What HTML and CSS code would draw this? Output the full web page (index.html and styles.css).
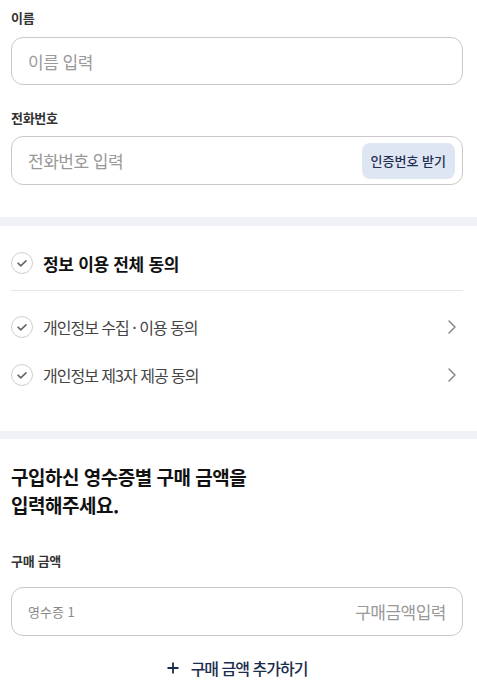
FILE: index.html
```html
<html lang="ko">
<head>
<meta charset="UTF-8" />
<meta name="viewport" content="width=device-width, initial-scale=1.0" />
<title>구매 금액 입력</title>
<link rel="stylesheet" href="styles.css">
</head>
<body>

<!-- 이름 / 전화번호 -->
<section class="form-section">
  <div class="label first">이름</div>
  <div class="field">
    <span class="placeholder">이름 입력</span>
  </div>

  <div class="label">전화번호</div>
  <div class="field phone">
    <span class="placeholder">전화번호 입력</span>
    <button class="verify-btn">인증번호 받기</button>
  </div>
</section>

<div class="band"></div>

<!-- 약관 동의 -->
<section class="agree-section">
  <div class="agree-all">
    <svg class="check" width="22" height="22" viewBox="0 0 22 22"><circle cx="11" cy="11" r="10.5" fill="none" stroke="#cfcfcf"/><path d="M7 11.2l2.8 2.6 5.2-5" fill="none" stroke="#666" stroke-width="1.6" stroke-linecap="round" stroke-linejoin="round"/></svg>
    <span>정보 이용 전체 동의</span>
  </div>
  <div class="divider"></div>
  <div class="agree-item">
    <svg class="check" width="22" height="22" viewBox="0 0 22 22"><circle cx="11" cy="11" r="10.5" fill="none" stroke="#cfcfcf"/><path d="M7 11.2l2.8 2.6 5.2-5" fill="none" stroke="#666" stroke-width="1.6" stroke-linecap="round" stroke-linejoin="round"/></svg>
    <span class="agree-text">개인정보 수집 · 이용 동의</span>
    <svg class="chevron" width="8" height="14" viewBox="0 0 8 14"><path d="M1 1l6 6-6 6" fill="none" stroke="#888" stroke-width="1.5" stroke-linecap="round" stroke-linejoin="round"/></svg>
  </div>
  <div class="agree-item">
    <svg class="check" width="22" height="22" viewBox="0 0 22 22"><circle cx="11" cy="11" r="10.5" fill="none" stroke="#cfcfcf"/><path d="M7 11.2l2.8 2.6 5.2-5" fill="none" stroke="#666" stroke-width="1.6" stroke-linecap="round" stroke-linejoin="round"/></svg>
    <span class="agree-text">개인정보 제3자 제공 동의</span>
    <svg class="chevron" width="8" height="14" viewBox="0 0 8 14"><path d="M1 1l6 6-6 6" fill="none" stroke="#888" stroke-width="1.5" stroke-linecap="round" stroke-linejoin="round"/></svg>
  </div>
</section>

<div class="band thin"></div>

<!-- 구매 금액 -->
<section class="amount-section">
  <h2 class="title">구입하신 영수증별 구매 금액을<br>입력해주세요.</h2>
  <div class="label">구매 금액</div>
  <div class="field amount">
    <span class="receipt">영수증 1</span>
    <span class="placeholder">구매금액입력</span>
  </div>
  <div class="add-row">
    <svg width="12" height="12" viewBox="0 0 12 12"><path d="M6 0.5v11M0.5 6h11" stroke="#1c2c4e" stroke-width="1.8"/></svg>
    <span>구매 금액 추가하기</span>
  </div>
</section>

</body>
</html>
```

FILE: styles.css
```css
body {
  font-family: "Noto Sans CJK KR", "Noto Sans", sans-serif;
  background-color: #fff;
  color: #222;
  margin: 0;
  padding: 0;
}
.form-section {
  padding: 8px 14px 32px 11px;
}
.label {
  font-size: 13px;
  font-weight: 600;
  letter-spacing: -0.3px;
  line-height: 20px;
  color: #333;
  margin: 23px 0 8px;
}
.label.first {
  margin-top: 0;
  margin-bottom: 9px;
}
.field {
  display: flex;
  align-items: center;
  height: 48px;
  box-sizing: border-box;
  border: 1px solid #c9c9c9;
  border-radius: 12px;
  padding: 0 16px;
}
.field.phone {
  height: 49px;
  padding-right: 7px;
  justify-content: space-between;
}
.placeholder {
  font-size: 17px;
  letter-spacing: -0.5px;
  color: #999;
}
.verify-btn {
  height: 36px;
  padding: 0 9px;
  border: none;
  border-radius: 8px;
  background-color: #dfe6f3;
  color: #1f2f52;
  font-family: inherit;
  font-size: 13px;
  font-weight: 500;
  letter-spacing: 0;
}
.band {
  height: 9px;
  background-color: #f0f1f6;
}
.band.thin {
  height: 8px;
}
.agree-section {
  padding: 15px 14px 32px 11px;
}
.agree-all {
  display: flex;
  align-items: center;
  height: 44px;
  font-size: 17px;
  font-weight: 700;
  letter-spacing: -0.3px;
  color: #111;
}
.check {
  flex-shrink: 0;
  margin-right: 10px;
}
.divider {
  height: 1px;
  background-color: #e6e6e6;
  margin: 5px 0 12px;
}
.agree-item {
  display: flex;
  align-items: center;
  height: 48px;
  font-size: 16px;
  letter-spacing: -1px;
  color: #444;
}
.agree-text {
  flex: 1;
}
.chevron {
  margin-right: 7px;
}
.amount-section {
  padding: 24px 14px 20px 11px;
}
.title {
  margin: 0;
  font-size: 19px;
  font-weight: 700;
  line-height: 28px;
  letter-spacing: -0.5px;
  color: #111;
}
.amount-section .label {
  margin-top: 32px;
  margin-bottom: 16px;
}
.field.amount {
  height: 49px;
  justify-content: space-between;
}
.receipt {
  font-size: 13px;
  letter-spacing: 0;
  color: #888;
}
.add-row {
  display: flex;
  align-items: center;
  justify-content: center;
  gap: 12px;
  margin-top: 20px;
  height: 24px;
  font-size: 16px;
  font-weight: 500;
  letter-spacing: -1px;
  color: #1c2c4e;
}
```
